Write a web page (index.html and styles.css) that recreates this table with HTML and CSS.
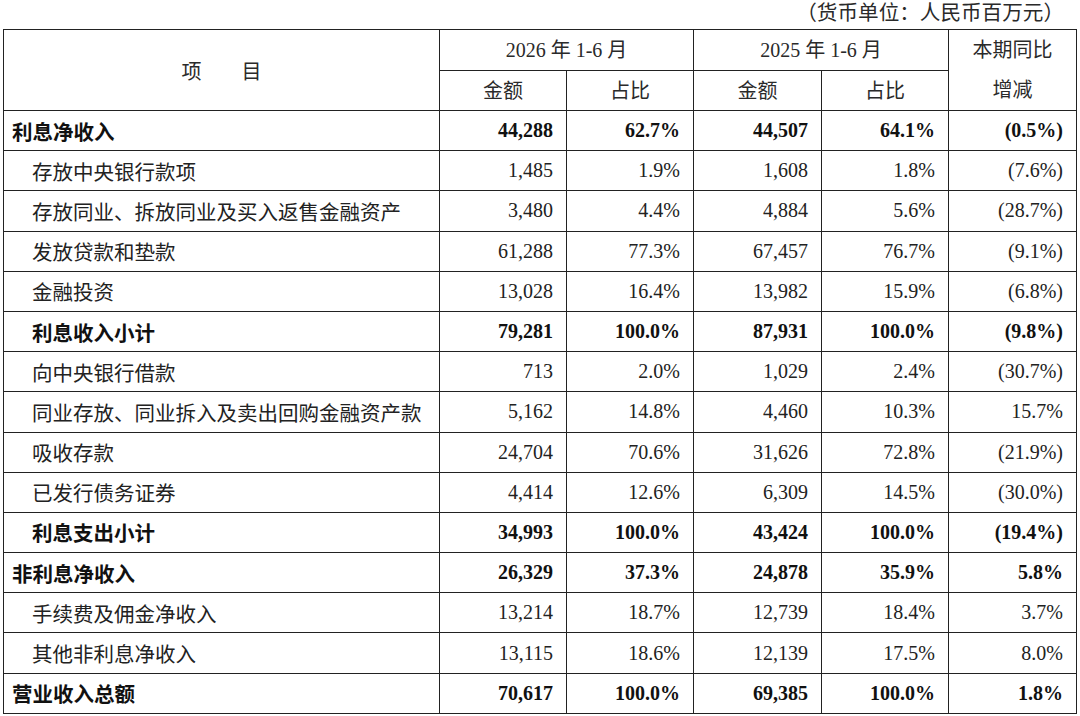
FILE: index.html
```html
<!DOCTYPE html>
<html lang="zh-CN">
<head>
<meta charset="utf-8">
<title>利息净收入</title>
<link rel="stylesheet" href="styles.css">
</head>
<body>
<div class="page">
  <div class="unit">（货币单位：人民币百万元）</div>
  <table class="fin">
    <colgroup>
      <col class="c-item"><col class="c-a"><col class="c-a"><col class="c-b"><col class="c-a"><col class="c-b">
    </colgroup>
    <thead>
      <tr class="h1">
        <th rowspan="2" class="hd-item">项　　目</th>
        <th colspan="2">2026 年 1-6 月</th>
        <th colspan="2">2025 年 1-6 月</th>
        <th rowspan="2" class="hd-chg"><span class="l1">本期同比</span><span class="l2">增减</span></th>
      </tr>
      <tr class="h2">
        <th>金额</th><th>占比</th><th>金额</th><th>占比</th>
      </tr>
    </thead>
    <tbody>
      <tr class="bold"><td class="lbl">利息净收入</td><td>44,288</td><td>62.7%</td><td>44,507</td><td>64.1%</td><td>(0.5%)</td></tr>
      <tr><td class="lbl ind">存放中央银行款项</td><td>1,485</td><td>1.9%</td><td>1,608</td><td>1.8%</td><td>(7.6%)</td></tr>
      <tr><td class="lbl ind">存放同业、拆放同业及买入返售金融资产</td><td>3,480</td><td>4.4%</td><td>4,884</td><td>5.6%</td><td>(28.7%)</td></tr>
      <tr><td class="lbl ind">发放贷款和垫款</td><td>61,288</td><td>77.3%</td><td>67,457</td><td>76.7%</td><td>(9.1%)</td></tr>
      <tr><td class="lbl ind">金融投资</td><td>13,028</td><td>16.4%</td><td>13,982</td><td>15.9%</td><td>(6.8%)</td></tr>
      <tr class="bold"><td class="lbl ind">利息收入小计</td><td>79,281</td><td>100.0%</td><td>87,931</td><td>100.0%</td><td>(9.8%)</td></tr>
      <tr><td class="lbl ind">向中央银行借款</td><td>713</td><td>2.0%</td><td>1,029</td><td>2.4%</td><td>(30.7%)</td></tr>
      <tr><td class="lbl ind">同业存放、同业拆入及卖出回购金融资产款</td><td>5,162</td><td>14.8%</td><td>4,460</td><td>10.3%</td><td>15.7%</td></tr>
      <tr><td class="lbl ind">吸收存款</td><td>24,704</td><td>70.6%</td><td>31,626</td><td>72.8%</td><td>(21.9%)</td></tr>
      <tr><td class="lbl ind">已发行债务证券</td><td>4,414</td><td>12.6%</td><td>6,309</td><td>14.5%</td><td>(30.0%)</td></tr>
      <tr class="bold"><td class="lbl ind">利息支出小计</td><td>34,993</td><td>100.0%</td><td>43,424</td><td>100.0%</td><td>(19.4%)</td></tr>
      <tr class="bold"><td class="lbl">非利息净收入</td><td>26,329</td><td>37.3%</td><td>24,878</td><td>35.9%</td><td>5.8%</td></tr>
      <tr><td class="lbl ind">手续费及佣金净收入</td><td>13,214</td><td>18.7%</td><td>12,739</td><td>18.4%</td><td>3.7%</td></tr>
      <tr><td class="lbl ind">其他非利息净收入</td><td>13,115</td><td>18.6%</td><td>12,139</td><td>17.5%</td><td>8.0%</td></tr>
      <tr class="bold"><td class="lbl">营业收入总额</td><td>70,617</td><td>100.0%</td><td>69,385</td><td>100.0%</td><td>1.8%</td></tr>
    </tbody>
  </table>
</div>
</body>
</html>
```

FILE: styles.css
```css
html, body {
  margin: 0;
  padding: 0;
  background: #ffffff;
}

body {
  font-family: "Liberation Serif", "Noto Sans CJK SC", serif;
  font-size: 20px;
  color: #222222;
}

.page {
  padding: 0 4px 0 3px;
}

.unit {
  text-align: right;
  height: 29px;
  line-height: 26px;
  padding-right: 12px;
  font-size: 20.6px;
  color: #2a2a2a;
}

.fin {
  width: 1074px;
  border-collapse: collapse;
  table-layout: fixed;
  border: 1px solid #222;
}

.c-item { width: 436px; }
.c-a { width: 127px; }
.c-b { width: 128px; }

.fin th,
.fin td {
  border: 1px solid #222;
  padding: 0;
}

.fin th {
  font-weight: normal;
  text-align: center;
  color: #2a2a2a;
}

.h1 th {
  height: 37px;
  padding-bottom: 3px;
}

.h2 th {
  height: 37px;
  padding-bottom: 2px;
}

.fin th.hd-item {
  padding-bottom: 0;
}

.fin th.hd-chg {
  padding-bottom: 0;
}

.hd-chg span {
  display: block;
  line-height: 40px;
}

.hd-chg .l1 {
  margin-top: -1px;
}

.fin td {
  height: 39.2px;
  text-align: right;
  padding-right: 13px;
  white-space: nowrap;
}

.fin td.lbl {
  text-align: left;
  padding-left: 8px;
  padding-right: 0;
  font-size: 20.5px;
}

.fin td.ind {
  padding-left: 28px;
}

.bold td {
  font-weight: bold;
  color: #111;
}
```
